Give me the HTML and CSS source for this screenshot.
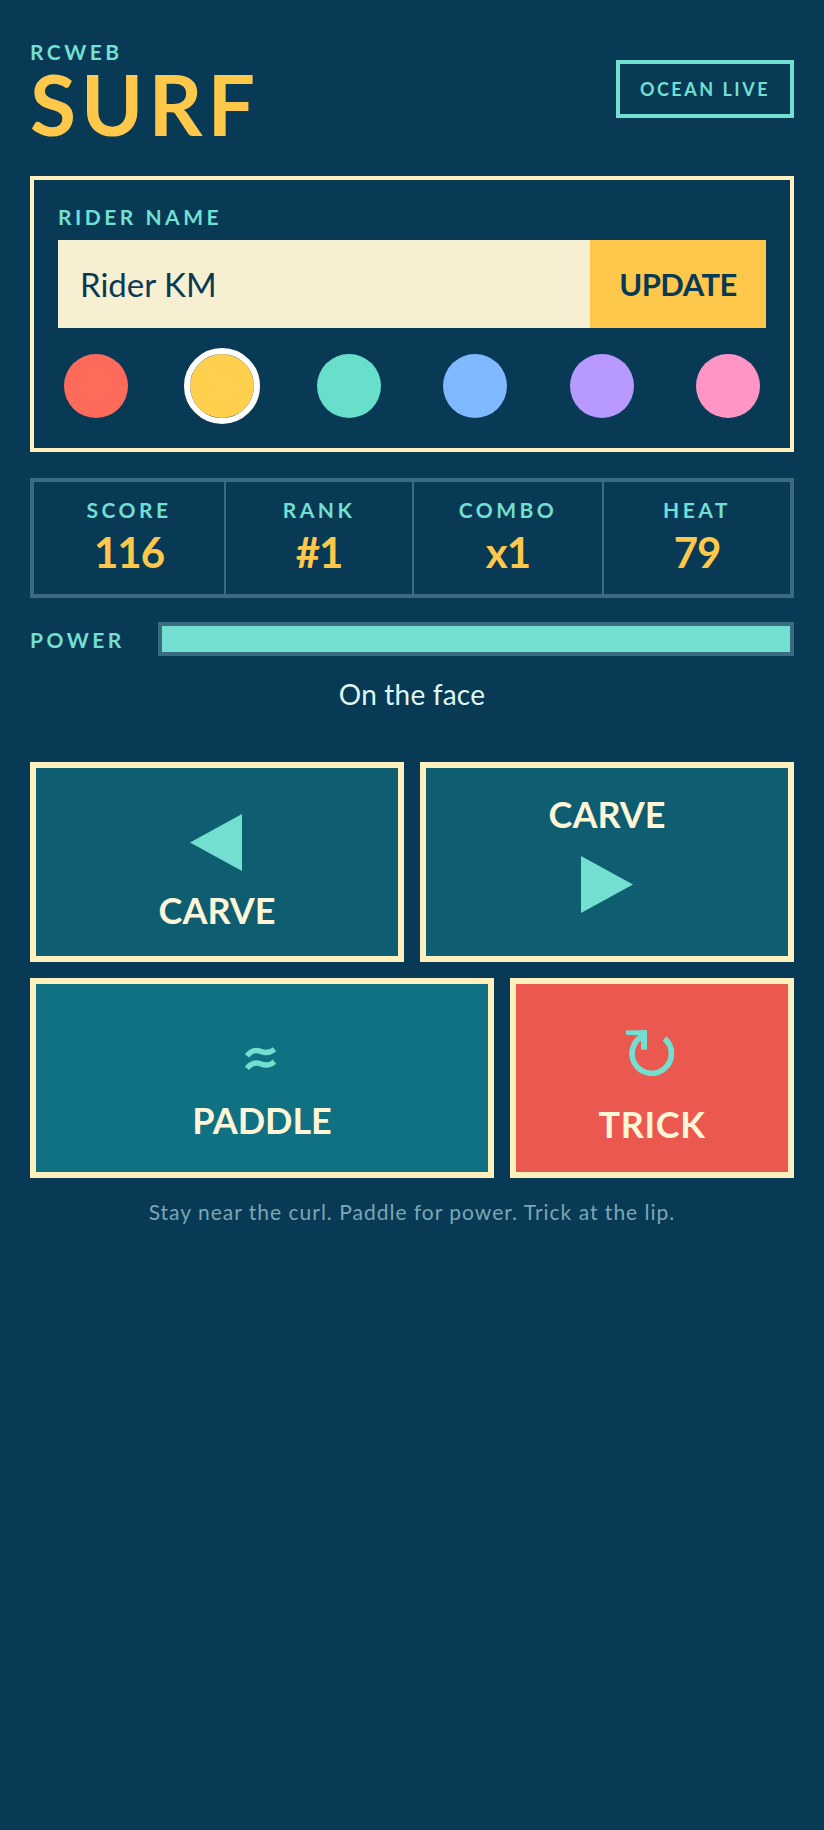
FILE: index.html
```html
<!DOCTYPE html>
<html lang="en">
<head>
  <meta charset="UTF-8" />
  <meta name="viewport" content="width=device-width, initial-scale=1.0" />
  <title>RCWEB Surf</title>
  <link rel="stylesheet" href="styles.css">
</head>
<body>
  <header class="top-bar">
    <div class="brand">
      <div class="brand-sub">RCWEB</div>
      <h1>SURF</h1>
    </div>
    <div class="badge">OCEAN LIVE</div>
  </header>

  <section class="rider-panel">
    <label class="field-label" for="rider-name">RIDER NAME</label>
    <div class="name-row">
      <input id="rider-name" class="name-input" type="text" value="Rider KM" />
      <button class="update-btn">UPDATE</button>
    </div>
    <div class="swatches">
      <span class="swatch swatch-red"></span>
      <span class="swatch swatch-yellow selected"></span>
      <span class="swatch swatch-teal"></span>
      <span class="swatch swatch-blue"></span>
      <span class="swatch swatch-purple"></span>
      <span class="swatch swatch-pink"></span>
    </div>
  </section>

  <section class="stats">
    <div class="stat"><div class="stat-label">SCORE</div><div class="stat-value">116</div></div>
    <div class="stat"><div class="stat-label">RANK</div><div class="stat-value">#1</div></div>
    <div class="stat"><div class="stat-label">COMBO</div><div class="stat-value">x1</div></div>
    <div class="stat"><div class="stat-label">HEAT</div><div class="stat-value">79</div></div>
  </section>

  <div class="power-row">
    <span class="power-label">POWER</span>
    <div class="power-track"><div class="power-fill"></div></div>
  </div>
  <div class="status">On the face</div>

  <div class="controls">
    <div class="control-row">
      <button class="control carve carve-left">
        <span class="control-icon">
          <svg width="52" height="57" viewBox="0 0 52 57"><polygon points="52,0 52,57 0,28.5" /></svg>
        </span>
        <span class="control-text">CARVE</span>
      </button>
      <button class="control carve carve-right">
        <span class="control-text">CARVE</span>
        <span class="control-icon">
          <svg width="52" height="57" viewBox="0 0 52 57"><polygon points="0,0 52,28.5 0,57" /></svg>
        </span>
      </button>
    </div>
    <div class="control-row action-row">
      <button class="control paddle">
        <span class="control-icon">
          <svg width="42" height="34" viewBox="0 0 42 34" fill="none">
            <path class="icon-line" d="M7 13.8C11 8.5 16 7.5 21 9.5C26 11.5 30 11 34.5 7.2" stroke-width="5.4" />
            <path class="icon-line" d="M7 26.3C11 21 16 20 21 22C26 24 30 23.5 34.5 19.7" stroke-width="5.4" />
          </svg>
        </span>
        <span class="control-text">PADDLE</span>
      </button>
      <button class="control trick">
        <span class="control-icon">
          <svg width="70" height="62" viewBox="0 0 70 62" fill="none">
            <path class="icon-line" d="M49.5 16.5A19.7 19.7 0 1 1 30 13" stroke-width="5.6" />
            <polygon points="11,8.5 32,8 32,27.7 26,27.7 26,13.5 11,12.7" />
          </svg>
        </span>
        <span class="control-text">TRICK</span>
      </button>
    </div>
  </div>

  <p class="hint">Stay near the curl. Paddle for power. Trick at the lip.</p>
</body>
</html>
```

FILE: styles.css
```css
:root {
  --bg: #083a56;
  --teal: #72dfd0;
  --gold: #ffc84a;
  --cream: #fff1bd;
  --line: #3b6b80;
}

html, body {
  margin: 0;
  padding: 0;
  min-height: 100%;
  background: var(--bg);
}

body {
  padding: 40px 30px;
  font-family: "Lato", "Noto Sans", sans-serif;
  color: var(--cream);
}

.top-bar {
  display: flex;
  justify-content: space-between;
  align-items: flex-start;
  margin-bottom: 32px;
}

.brand-sub {
  font-size: 21px;
  line-height: 24px;
  font-weight: 700;
  letter-spacing: 3.5px;
  color: var(--teal);
}

h1 {
  margin: 0;
  font-size: 84px;
  line-height: 80px;
  font-weight: 700;
  letter-spacing: 5px;
  color: var(--gold);
}

.badge {
  margin-top: 20px;
  border: 4px solid var(--teal);
  padding: 16px 20px;
  font-size: 18px;
  line-height: 18px;
  font-weight: 700;
  letter-spacing: 2.5px;
  color: var(--teal);
}

.rider-panel {
  border: 4px solid var(--cream);
  padding: 24px;
}

.field-label {
  display: block;
  margin-bottom: 10px;
  font-size: 21px;
  line-height: 26px;
  font-weight: 700;
  letter-spacing: 3.5px;
  color: var(--teal);
}

.name-row {
  display: flex;
  height: 88px;
}

.name-input {
  flex: 1;
  min-width: 0;
  border: none;
  padding: 0 22px;
  background: #f7efd2;
  color: var(--bg);
  font-family: inherit;
  font-size: 33px;
}

.update-btn {
  width: 176px;
  border: none;
  background: var(--gold);
  color: var(--bg);
  font-family: inherit;
  font-size: 31px;
  font-weight: 700;
  letter-spacing: -0.6px;
}

.swatches {
  display: flex;
  justify-content: space-between;
  margin-top: 20px;
}

.swatch {
  width: 64px;
  height: 64px;
  border: 6px solid transparent;
  border-radius: 50%;
  background-clip: padding-box;
}

.swatch.selected { border-color: #ffffff; }
.swatch-red { background-color: #ff6b5b; }
.swatch-yellow { background-color: #ffd04d; }
.swatch-teal { background-color: #68dfcb; }
.swatch-blue { background-color: #7fb9ff; }
.swatch-purple { background-color: #b899ff; }
.swatch-pink { background-color: #ff95c5; }

.stats {
  display: grid;
  grid-template-columns: 190fr 188fr 190fr 188fr;
  margin-top: 26px;
  border: 4px solid var(--line);
}

.stat {
  padding: 15px 0 17px;
  text-align: center;
  border-left: 2px solid var(--line);
}

.stat:first-child { border-left: none; }

.stat-label {
  margin-bottom: 4px;
  font-size: 21px;
  line-height: 26px;
  font-weight: 700;
  letter-spacing: 3.5px;
  color: var(--teal);
}

.stat-value {
  font-size: 42px;
  line-height: 50px;
  font-weight: 700;
  letter-spacing: -1px;
  color: var(--gold);
}

.power-row {
  display: flex;
  align-items: center;
  margin-top: 24px;
}

.power-label {
  flex: none;
  width: 128px;
  font-size: 21px;
  font-weight: 700;
  letter-spacing: 3.5px;
  color: var(--teal);
}

.power-track {
  flex: 1;
  height: 26px;
  border: 4px solid var(--line);
}

.power-fill {
  height: 100%;
  background: var(--teal);
}

.status {
  margin-top: 20px;
  text-align: center;
  font-size: 28px;
  line-height: 36px;
  letter-spacing: 0.2px;
  color: #dff7f4;
}

.controls {
  display: flex;
  flex-direction: column;
  gap: 16px;
  margin-top: 50px;
}

.control-row {
  display: grid;
  grid-template-columns: 1fr 1fr;
  gap: 16px;
}

.action-row {
  grid-template-columns: 464px 284px;
}

.control {
  height: 200px;
  display: flex;
  flex-direction: column;
  align-items: center;
  justify-content: center;
  gap: 8px;
  border: 6px solid var(--cream);
  padding: 0;
  font-family: inherit;
  font-size: 36px;
  line-height: 36px;
  font-weight: 700;
  color: #fff6d8;
}

.carve { background: #0e5d70; }
.paddle { background: #0f7182; }
.trick { background: #eb5850; }

.control-icon {
  display: flex;
  align-items: center;
  justify-content: center;
  height: 88px;
}

.control-icon svg { fill: var(--teal); }
.icon-line { fill: none; stroke: var(--teal); }

.carve-left .control-icon svg { margin: 4px 3px 0 0; }
.carve-right .control-icon svg { margin-right: 1px; }

.paddle .control-icon { height: 75px; }
.paddle .control-icon svg { margin: 6px 2px 0 0; }

.trick .control-text { letter-spacing: 0.6px; }
.trick .control-icon { height: 83px; }
.trick .control-icon svg { margin: 0 4px 6px 0; }

.hint {
  margin: 20px 0 0;
  text-align: center;
  font-size: 21px;
  line-height: 28px;
  letter-spacing: 1px;
  color: #7ba6b4;
}
```
